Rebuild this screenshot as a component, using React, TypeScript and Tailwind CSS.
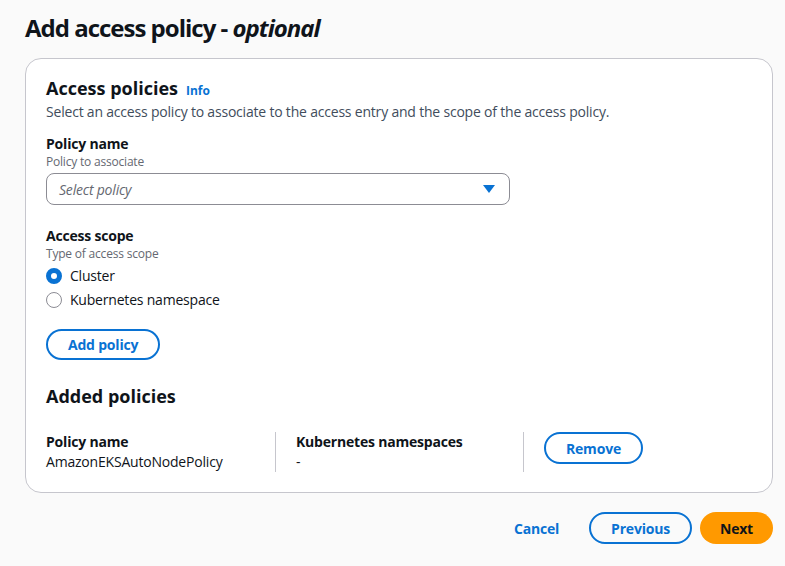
import React from "react";

const font = { fontFamily: '"Open Sans", "Noto Sans", Arial, sans-serif' };

function Radio({ checked, label }: { checked?: boolean; label: string }) {
  return (
    <div className="flex items-center gap-[8px] h-[20px]">
      {checked ? (
        <span className="w-[16px] h-[16px] rounded-full border-[5px] border-[#0972d3] bg-white" />
      ) : (
        <span className="w-[16px] h-[16px] rounded-full border-[1.5px] border-[#8c8c94] bg-white" />
      )}
      <span className="text-[14px] leading-[20px] text-[#0f141a]">{label}</span>
    </div>
  );
}

export default function App() {
  return (
    <div className="min-h-screen bg-[#fafafa] text-[#0f141a] tracking-[-0.2px]" style={font}>
      <div className="ml-[25px] w-[748px] pt-[13px] pb-[20px]">
        <h1 className="text-[24px] leading-[30px] font-bold tracking-[-1px]">
          Add access policy - <span className="italic">optional</span>
        </h1>

        <div className="mt-[15px] bg-white border border-[#c6c6cd] rounded-[16px] px-[20px] pt-[17px] pb-[20px]">
          <div className="flex items-baseline gap-[8px]">
            <h2 className="text-[18px] leading-[24px] font-bold tracking-normal">Access policies</h2>
            <a className="text-[12px] font-bold text-[#0972d3] tracking-normal">Info</a>
          </div>
          <p className="mt-[2px] text-[14px] leading-[20px] text-[#414d5c]">
            Select an access policy to associate to the access entry and the scope of the access policy.
          </p>

          <div className="mt-[12px] text-[14px] leading-[20px] font-bold">Policy name</div>
          <div className="text-[12px] leading-[16px] text-[#656871]">Policy to associate</div>
          <div className="mt-[3px] w-[464px] h-[32px] border border-[#8c8c94] rounded-[8px] flex items-center justify-between pl-[12px] pr-[14px]">
            <span className="text-[14px] italic text-[#656871]">Select policy</span>
            <svg width="12" height="8" viewBox="0 0 12 8">
              <polygon points="0,0 12,0 6,8" fill="#0972d3" />
            </svg>
          </div>

          <div className="mt-[21px] text-[14px] leading-[20px] font-bold">Access scope</div>
          <div className="text-[12px] leading-[16px] text-[#656871]">Type of access scope</div>
          <div className="mt-[4px] flex flex-col gap-[4px]">
            <Radio checked label="Cluster" />
            <Radio label="Kubernetes namespace" />
          </div>

          <button className="mt-[19px] h-[31px] px-[20px] rounded-full border-2 border-[#0972d3] text-[#0972d3] text-[14px] font-bold">
            Add policy
          </button>

          <h2 className="mt-[24px] text-[18px] leading-[24px] font-bold tracking-normal">Added policies</h2>

          <div className="mt-[24px] flex">
            <div className="w-[229px]">
              <div className="text-[14px] leading-[20px] font-bold">Policy name</div>
              <div className="text-[14px] leading-[20px]">AmazonEKSAutoNodePolicy</div>
            </div>
            <div className="w-[248px] border-l border-[#c6c6cd] pl-[20px]">
              <div className="text-[14px] leading-[20px] font-bold">Kubernetes namespaces</div>
              <div className="text-[14px] leading-[20px]">-</div>
            </div>
            <div className="border-l border-[#c6c6cd] pl-[20px]">
              <button className="h-[32px] px-[20px] rounded-full border-2 border-[#0972d3] text-[#0972d3] text-[14px] font-bold">
                Remove
              </button>
            </div>
          </div>
        </div>

        <div className="mt-[19px] flex justify-end items-center gap-[8px]">
          <button className="h-[32px] px-[20px] mr-[2px] text-[#0972d3] text-[14px] font-bold">Cancel</button>
          <button className="h-[32px] px-[20px] rounded-full border-2 border-[#0972d3] text-[#0972d3] text-[14px] font-bold">
            Previous
          </button>
          <button className="h-[32px] px-[20px] rounded-full bg-[#ff9900] text-[#0f141a] text-[14px] font-bold">
            Next
          </button>
        </div>
      </div>
    </div>
  );
}
